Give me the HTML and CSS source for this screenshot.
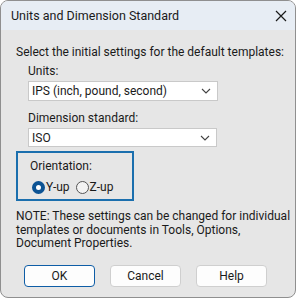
FILE: index.html
```html
<!DOCTYPE html>
<html lang="en">
<head>
	<meta charset="UTF-8">
	<title>Units and Dimension Standard</title>
	<link rel="stylesheet" href="styles.css">
</head>
<body>
	<div class="dialog">
		<!--标题栏-->
		<div class="titlebar">
			<span class="title">Units and Dimension Standard</span>
			<svg class="close" width="12" height="12" viewBox="0 0 12 12"><path d="M1 1L11 11M11 1L1 11" stroke="#1a1a1a" stroke-width="1.2" fill="none"/></svg>
		</div>
		<!--内容-->
		<div class="content">
			<p class="intro">Select the initial settings for the default templates:</p>
			<div class="field">
				<label>Units:</label>
				<div class="combo units">
					<span>IPS (inch, pound, second)</span>
					<svg width="10" height="6" viewBox="0 0 10 6"><path d="M1 1L5 5L9 1" stroke="#444" stroke-width="1.1" fill="none"/></svg>
				</div>
			</div>
			<div class="field">
				<label>Dimension standard:</label>
				<div class="combo std">
					<span>ISO</span>
					<svg width="10" height="6" viewBox="0 0 10 6"><path d="M1 1L5 5L9 1" stroke="#444" stroke-width="1.1" fill="none"/></svg>
				</div>
			</div>
			<div class="group">
				<div class="group-title">Orientation:</div>
				<div class="radios">
					<span class="radio checked"><i></i>Y-up</span>
					<span class="radio"><i></i>Z-up</span>
				</div>
			</div>
			<p class="note">NOTE: These settings can be changed for individual templates or documents in Tools, Options, Document Properties.</p>
			<div class="buttons">
				<button class="btn default">OK</button>
				<button class="btn">Cancel</button>
				<button class="btn">Help</button>
			</div>
		</div>
	</div>
</body>
</html>
```

FILE: styles.css
```css
*{
	margin:0;
	padding:0;
	box-sizing:border-box;
}
body{
	background:#fff;
	font-family:Roboto,"Liberation Sans",sans-serif;
	font-size:12px;
	color:#1a1a1a;
}
.dialog{
	width:296px;
	height:298px;
	border:1px solid #8f8f8f;
	border-radius:8px;
	overflow:hidden;
	background:#e6e6e6;
}
.titlebar{
	height:29px;
	background:#e7edf4;
	display:flex;
	align-items:center;
	justify-content:space-between;
	padding:0 7px 0 10px;
}
.title{
	font-size:12.5px;
}
.close{
	margin-right:1px;
}
.content{
	padding:15px 0 0 15px;
}
.intro{
	line-height:15px;
	white-space:nowrap;
}
.field{
	margin-left:12px;
	margin-top:4px;
}
.field label{
	display:block;
	line-height:15px;
}
.combo{
	height:20px;
	margin-top:2px;
	background:#fff;
	border:1px solid #c9c9c9;
	display:flex;
	align-items:center;
	justify-content:space-between;
	padding:0 6px 0 3px;
}
.combo.units{
	width:190px;
}
.combo.std{
	width:189px;
	height:19px;
}
.field + .field{
	margin-top:10px;
}
.group{
	width:118px;
	height:50px;
	margin-top:4px;
	border:2px solid #1b6fae;
	padding:6px 0 0 12px;
}
.group-title{
	line-height:15px;
}
.radios{
	display:flex;
	gap:6px;
	margin-top:6px;
	line-height:15px;
}
.radio{
	display:flex;
	align-items:center;
}
.radio i{
	width:13px;
	height:13px;
	border:1px solid #555;
	border-radius:50%;
	background:#f3f3f3;
	margin-right:1px;
}
.radio.checked i{
	border:4px solid #0c5394;
	background:#fff;
}
.radio.checked{
	margin-left:2px;
}
.note{
	margin-top:9px;
	width:275px;
	line-height:13.5px;
}
.buttons{
	display:flex;
	gap:15px;
	margin-top:14px;
	margin-left:8px;
}
.btn{
	width:71px;
	height:22px;
	font-family:inherit;
	font-size:12px;
	color:#1a1a1a;
	background:#fdfdfd;
	border:1px solid #cfcfcf;
	border-radius:4px;
}
.btn.default{
	border-color:#0e5da6;
}
```
